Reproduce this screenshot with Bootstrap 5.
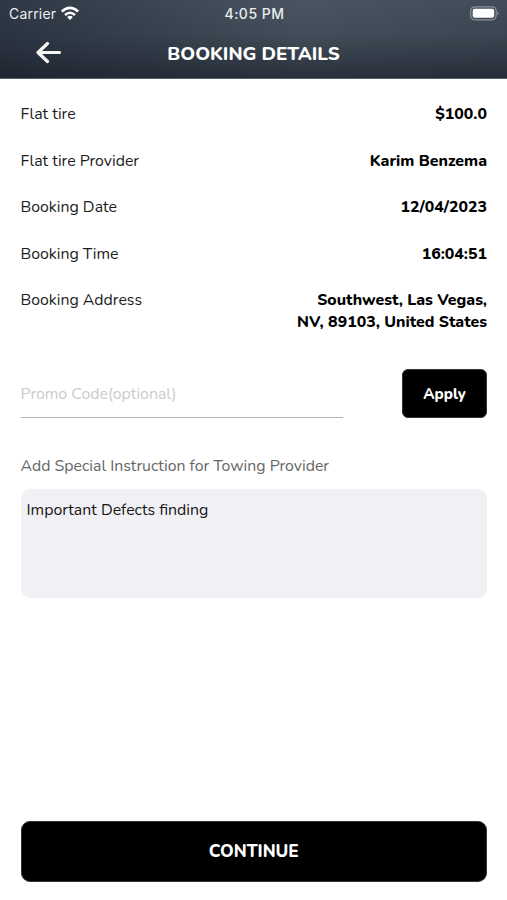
<!DOCTYPE html>
<html lang="en">
<head>
<meta charset="utf-8">
<meta name="viewport" content="width=device-width, initial-scale=1">
<title>Booking Details</title>
<link href="https://cdn.jsdelivr.net/npm/bootstrap@5.3.0/dist/css/bootstrap.min.css" rel="stylesheet">
<style>
  body { font-family: Nunito, "Noto Sans", sans-serif; font-size: 15.87px; line-height: 22px; color: #1c1c1c; }
  .screen { height: 900px; }
  .app-header { height: 79px; color: #fff; border-bottom: 1px solid #59616b;
    background: linear-gradient(90deg, rgba(20,27,40,.5), rgba(20,27,40,.12) 45%, rgba(20,27,40,0) 60%, rgba(20,27,40,.15)), linear-gradient(#4a5561, #414d58 45%, #29303c); }
  .status-row { height: 27px; padding: 0 7px 0 9px; font-family: Inter, sans-serif; font-size: 14px; color: #e9edf0; }
  .status-row > div { flex: 1 1 0; }
  .carrier { letter-spacing: .2px; }
  .clock { letter-spacing: .5px; font-weight: 500; }
  .title-row { height: 52px; padding: 0 36px; }
  .title-row > span, .title-row > button { flex: 0 0 26px; }
  .heading { font-size: 18.7px; font-weight: 800; line-height: 24px; padding-top: 1px; }
  .content-area { padding: 24px 20px 18px 20.5px; }
  .details { gap: 24.5px; }
  .value { font-weight: 800; color: #000; line-height: 22px; }
  .promo { width: 322.5px; height: 49px; border-bottom: 1px solid #b5b5b5; padding: 2px 0 0; background: transparent; }
  .promo::placeholder { color: #cbcbcb; opacity: 1; }
  .promo, .note { font: inherit; }
  .apply { width: 85px; height: 49px; border-radius: 6px; font-size: 15px; font-weight: 800; padding: 1px 0 0; }
  .note-label { color: #666; margin-top: 36.5px; margin-bottom: 12.5px; }
  .note { height: 109px; border-radius: 9px; background: #f1f0f5; padding: 10px 6px; resize: none; color: #161616; }
  .continue { height: 61px; border-radius: 9px; font-size: 17.2px; font-weight: 800; }
  .apply, .continue { background: #000; color: #fff; border: 1px solid #333; }
  .promo-row { margin-top: 36px; }
</style>
</head>
<body>
<main class="screen d-flex flex-column bg-white">
  <header class="app-header flex-shrink-0">
    <div class="status-row d-flex align-items-center">
      <div class="d-flex align-items-center"><span class="carrier">Carrier</span>
        <svg class="ms-1" width="20" height="15" viewBox="0 0 20 15" fill="none" stroke="#fff" stroke-width="2.5"><path d="M1.8 5.5Q10-1.8 18.2 5.5M5 9Q10 4.4 15 9"/><path d="M7.1 10.9Q10 8.5 12.9 10.9L10 13.9Z" fill="#fff" stroke="none"/></svg>
      </div>
      <div class="text-center clock">4:05 PM</div>
      <div class="d-flex justify-content-end">
        <svg width="30" height="15" viewBox="0 0 30 15"><rect x=".7" y=".8" width="25.5" height="13" rx="4" fill="none" stroke="#89929b" stroke-width="1.2"/><rect x="2.7" y="2.8" width="21.5" height="9" rx="2" fill="#fff"/><path d="M27.5 5.2Q30 7.3 27.5 9.4Z" fill="#89929b"/></svg>
      </div>
    </div>
    <div class="title-row d-flex align-items-center justify-content-between">
      <button type="button" class="btn p-0 border-0 d-flex" aria-label="Back">
        <svg width="26" height="24" viewBox="0 0 26 24" fill="none" stroke="#f5f5f2" stroke-width="3.2" stroke-linecap="round" stroke-linejoin="round"><path d="M11.5 2.5 2 11.5l9.5 9M2 11.5H23.5"/></svg>
      </button>
      <h1 class="heading m-0">BOOKING DETAILS</h1>
      <span></span>
    </div>
  </header>
  <section class="content-area flex-grow-1 d-flex flex-column">
    <div class="details d-flex flex-column">
      <div class="d-flex justify-content-between"><span>Flat tire</span><span class="value">$100.0</span></div>
      <div class="d-flex justify-content-between"><span>Flat tire Provider</span><span class="value">Karim Benzema</span></div>
      <div class="d-flex justify-content-between"><span>Booking Date</span><span class="value">12/04/2023</span></div>
      <div class="d-flex justify-content-between"><span>Booking Time</span><span class="value">16:04:51</span></div>
      <div class="d-flex justify-content-between"><span>Booking Address</span><span class="value text-end">Southwest, Las Vegas,<br>NV, 89103, United States</span></div>
    </div>
    <div class="promo-row d-flex justify-content-between">
      <input class="promo form-control border-top-0 border-start-0 border-end-0 rounded-0" placeholder="Promo Code(optional)" aria-label="Promo code">
      <button type="button" class="btn apply">Apply</button>
    </div>
    <label class="note-label" for="note">Add Special Instruction for Towing Provider</label>
    <textarea id="note" class="note form-control border-0">Important Defects finding</textarea>
    <button type="button" class="btn continue w-100 mt-auto p-0">CONTINUE</button>
  </section>
</main>
<script src="https://cdn.jsdelivr.net/npm/bootstrap@5.3.0/dist/js/bootstrap.bundle.min.js"></script>
</body>
</html>
